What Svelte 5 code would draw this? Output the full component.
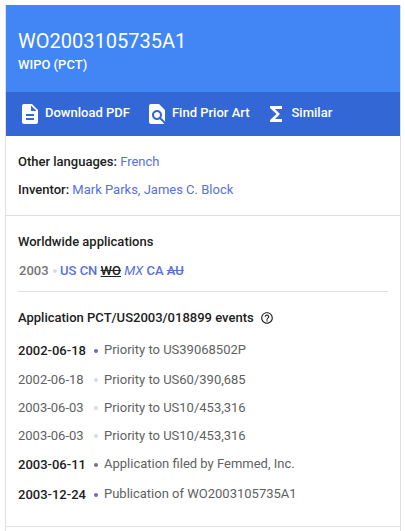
<script lang="ts">
  // Knowledge card for a patent document: title, actions, people,
  // worldwide applications and the event timeline.

  type PatentEvent = {
    date: string
    title: string
    kind: 'key' | 'filed' | 'minor'
  }

  const publication = 'WO2003105735A1'

  const actions = [
    {
      label: 'Download PDF',
      cls: 'download',
      path: 'M14 2H6c-1.1 0-1.99.9-1.99 2L4 20c0 1.1.89 2 1.99 2H18c1.1 0 2-.9 2-2V8l-6-6zm2 16H8v-2h8v2zm0-4H8v-2h8v2zm-3-5V3.5L18.5 9H13z',
    },
    {
      label: 'Find Prior Art',
      cls: 'prior',
      path: 'M20 19.59V8l-6-6H6c-1.1 0-1.99.9-1.99 2L4 20c0 1.1.89 2 1.99 2H18c.45 0 .85-.15 1.19-.4l-4.43-4.43c-.8.52-1.74.83-2.76.83-2.76 0-5-2.24-5-5s2.24-5 5-5 5 2.24 5 5c0 1.02-.31 1.96-.83 2.75L20 19.59zM9 13c0 1.66 1.34 3 3 3s3-1.34 3-3-1.34-3-3-3-3 1.34-3 3z',
    },
    {
      label: 'Similar',
      cls: 'similar',
      path: 'M18 4H6v2l6.5 6L6 18v2h12v-3h-7l5-5-5-5h7z',
    },
  ]

  const countries = [
    { code: 'US', cls: '' },
    { code: 'CN', cls: '' },
    { code: 'WO', cls: 'current' },
    { code: 'MX', cls: 'unknown' },
    { code: 'CA', cls: '' },
    { code: 'AU', cls: 'ceased' },
  ]

  const events: PatentEvent[] = [
    { date: '2002-06-18', title: 'Priority to US39068502P', kind: 'key' },
    { date: '2002-06-18', title: 'Priority to US60/390,685', kind: 'minor' },
    { date: '2003-06-03', title: 'Priority to US10/453,316', kind: 'minor' },
    { date: '2003-06-03', title: 'Priority to US10/453,316', kind: 'minor' },
    { date: '2003-06-11', title: 'Application filed by Femmed, Inc.', kind: 'filed' },
    { date: '2003-12-24', title: 'Publication of WO2003105735A1', kind: 'key' },
  ]
</script>

<section class="card">
  <header>
    <h1>{publication}</h1>
    <p>WIPO (PCT)</p>
  </header>

  <nav>
    {#each actions as action}
      <span class="action {action.cls}">
        <svg viewBox="0 0 24 24"><path d={action.path} /></svg>
        <span class="label">{action.label}</span>
      </span>
    {/each}
  </nav>

  <div class="people">
    <div class="fact"><b>Other languages:</b> <span class="link">French</span></div>
    <div class="fact inventor"><b>Inventor:</b> <span class="link">Mark Parks, James C. Block</span></div>
  </div>

  <div class="worldwide">
    <h2>Worldwide applications</h2>
    <div class="family">
      <span class="year">2003</span>
      <i class="dot"></i>
      <span class="codes">
        {#each countries as country}
          <span class="code {country.cls}">{country.code}</span>{' '}
        {/each}
      </span>
    </div>
  </div>

  <div class="timeline">
    <h2>
      <span class="heading">Application PCT/US2003/018899 events</span>
      <svg viewBox="0 0 24 24"><path d="M11 18h2v-2h-2v2zm1-16C6.48 2 2 6.48 2 12s4.48 10 10 10 10-4.48 10-10S17.52 2 12 2zm0 18c-4.41 0-8-3.59-8-8s3.59-8 8-8 8 3.59 8 8-3.59 8-8 8zm0-14c-2.21 0-4 1.79-4 4h2c0-1.1.9-2 2-2s2 .9 2 2c0 2-3 1.75-3 5h2c0-2.25 3-2.5 3-5 0-2.21-1.79-4-4-4z" /></svg>
    </h2>
    {#each events as event}
      <div class="event {event.kind}">
        <span class="date">{event.date}</span>
        <i class="dot"></i>
        <span class="title">{event.title}</span>
      </div>
    {/each}
  </div>
</section>

<style>
  :global(body) {
    background: #fff;
    overflow: hidden;
  }
  .card {
    box-sizing: border-box;
    width: 396px;
    height: 526px;
    margin: 5px 0 0 5px;
    border: 1px solid #e0e0e0;
    border-width: 0 1px;
    font: 13px/20px Roboto, sans-serif;
    color: #212121;
    white-space: nowrap;
  }
  h1,
  h2,
  p {
    margin: 0;
  }
  header {
    box-sizing: border-box;
    height: 87px;
    padding: 23px 12px 0;
    background: #4285f4;
    color: #fff;
  }
  h1 {
    font-size: 20px;
    font-weight: 400;
    line-height: 26px;
  }
  header p {
    margin-top: 1px;
    font-weight: 500;
    line-height: 20px;
  }
  nav {
    display: flex;
    height: 44px;
    background: #3367d6;
    color: #fff;
    font-weight: 500;
  }
  .action {
    display: flex;
    align-items: center;
    height: 44px;
  }
  .action svg {
    width: 24px;
    height: 24px;
    fill: currentColor;
  }
  .label {
    margin: -3px 0 0 3px;
  }
  .download {
    margin-left: 12px;
  }
  .prior {
    margin-left: 15px;
  }
  .similar {
    margin-left: 14px;
  }
  .similar .label {
    margin-left: 4px;
  }
  .people {
    box-sizing: border-box;
    height: 80px;
    padding: 16px 12px 0;
    border-bottom: 1px solid #e0e0e0;
  }
  .inventor {
    margin-top: 8px;
  }
  b {
    font-weight: 500;
  }
  .link {
    color: #5870dc;
  }
  .worldwide {
    box-sizing: border-box;
    height: 76px;
    margin: 0 12px;
    padding-top: 16px;
    border-bottom: 1px solid #e0e0e0;
  }
  h2 {
    font-size: 13px;
    font-weight: 500;
    line-height: 20px;
  }
  .family {
    display: flex;
    align-items: center;
    margin-top: 9px;
    padding-left: 1px;
    font-weight: 500;
  }
  .year {
    width: 34px;
    color: #757575;
  }
  .dot {
    width: 4px;
    height: 4px;
    border-radius: 50%;
    background: #dcdcdc;
  }
  .codes {
    margin-left: 3px;
    color: #5870dc;
  }
  .current {
    color: #212121;
    text-decoration: underline line-through;
  }
  .unknown {
    font-style: italic;
    font-weight: 400;
  }
  .ceased {
    text-decoration: line-through;
  }
  .timeline {
    box-sizing: border-box;
    height: 235px;
    padding: 16px 12px 0;
    border-bottom: 1px solid #e0e0e0;
  }
  .timeline h2 {
    display: flex;
    align-items: center;
    gap: 6px;
    margin-bottom: 8px;
  }
  .timeline h2 svg {
    width: 14px;
    height: 14px;
    margin-top: -1px;
    fill: #212121;
  }
  .event {
    display: flex;
    align-items: center;
    height: 28px;
    color: #616161;
  }
  .event.key,
  .event.filed {
    height: 30px;
  }
  .date {
    width: 76px;
  }
  .key .date,
  .filed .date {
    color: #212121;
    font-weight: 500;
  }
  .title {
    margin-left: 6px;
  }
  .key .title,
  .filed .title {
    margin-top: -2px;
  }
  .key .dot,
  .filed .dot {
    margin-top: -1px;
    background: #6a66c4;
  }
  .filed .dot {
    background: #757575;
  }
</style>
